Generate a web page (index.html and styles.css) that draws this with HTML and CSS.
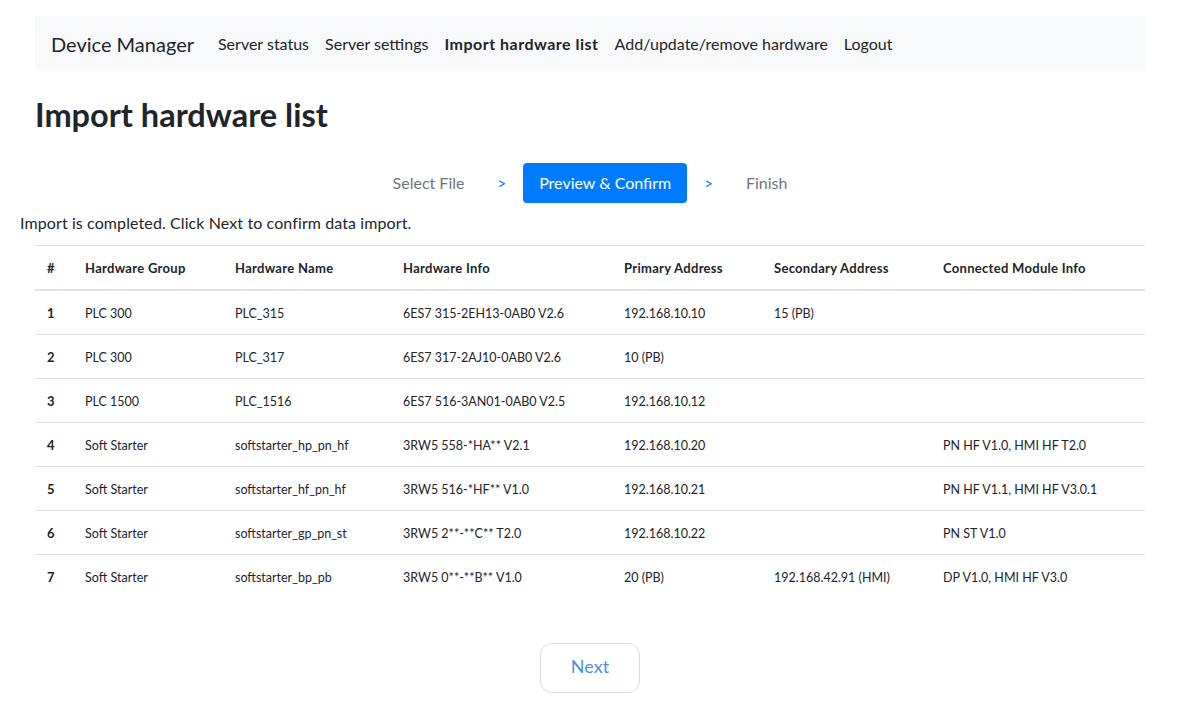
FILE: index.html
```html
<!DOCTYPE html>
<html lang="en">
<head>
<meta charset="utf-8">
<title>Import hardware list</title>
<link rel="stylesheet" href="styles.css">
</head>
<body>
<div class="page">
  <nav class="navbar">
    <span class="brand">Device Manager</span>
    <a class="nav-link">Server status</a>
    <a class="nav-link">Server settings</a>
    <a class="nav-link active">Import hardware list</a>
    <a class="nav-link">Add/update/remove hardware</a>
    <a class="nav-link">Logout</a>
  </nav>

  <h2 class="title">Import hardware list</h2>

  <div class="steps">
    <span class="step">Select File</span>
    <span class="sep">&gt;</span>
    <span class="step current">Preview &amp; Confirm</span>
    <span class="sep">&gt;</span>
    <span class="step">Finish</span>
  </div>

  <p class="message">Import is completed. Click Next to confirm data import.</p>

  <table class="table">
    <colgroup>
      <col class="c1"><col class="c2"><col class="c3"><col class="c4"><col class="c5"><col class="c6"><col class="c7">
    </colgroup>
    <thead>
      <tr><th>#</th><th>Hardware Group</th><th>Hardware Name</th><th>Hardware Info</th><th>Primary Address</th><th>Secondary Address</th><th>Connected Module Info</th></tr>
    </thead>
    <tbody>
      <tr><th>1</th><td>PLC 300</td><td>PLC_315</td><td>6ES7 315-2EH13-0AB0 V2.6</td><td>192.168.10.10</td><td>15 (PB)</td><td></td></tr>
      <tr><th>2</th><td>PLC 300</td><td>PLC_317</td><td>6ES7 317-2AJ10-0AB0 V2.6</td><td>10 (PB)</td><td></td><td></td></tr>
      <tr><th>3</th><td>PLC 1500</td><td>PLC_1516</td><td>6ES7 516-3AN01-0AB0 V2.5</td><td>192.168.10.12</td><td></td><td></td></tr>
      <tr><th>4</th><td>Soft Starter</td><td>softstarter_hp_pn_hf</td><td>3RW5 558-*HA** V2.1</td><td>192.168.10.20</td><td></td><td>PN HF V1.0, HMI HF T2.0</td></tr>
      <tr><th>5</th><td>Soft Starter</td><td>softstarter_hf_pn_hf</td><td>3RW5 516-*HF** V1.0</td><td>192.168.10.21</td><td></td><td>PN HF V1.1, HMI HF V3.0.1</td></tr>
      <tr><th>6</th><td>Soft Starter</td><td>softstarter_gp_pn_st</td><td>3RW5 2**-**C** T2.0</td><td>192.168.10.22</td><td></td><td>PN ST V1.0</td></tr>
      <tr><th>7</th><td>Soft Starter</td><td>softstarter_bp_pb</td><td>3RW5 0**-**B** V1.0</td><td>20 (PB)</td><td>192.168.42.91 (HMI)</td><td>DP V1.0, HMI HF V3.0</td></tr>
    </tbody>
  </table>

  <div class="actions">
    <button class="next-btn" type="button">Next</button>
  </div>
</div>
</body>
</html>
```

FILE: styles.css
```css
* { box-sizing: border-box; }
html, body { margin: 0; padding: 0; background: #fff; }
body {
  font-family: Lato, "Open Sans", sans-serif;
  color: #212529;
  font-size: 16px;
  line-height: 1.5;
}
.page {
  width: 1160px;
  padding: 16px 0 0 20px;
}
.navbar {
  margin: 0 15px;
  height: 55px;
  background: #f8f9fa;
  display: flex;
  align-items: center;
  padding: 0 16px;
}
.brand {
  font-size: 20px;
  margin-right: 16px;
  color: #212529;
}
.nav-link {
  padding: 0 8px;
  color: #212529;
  font-size: 16px;
}
.nav-link.active { font-weight: 700; letter-spacing: 0.5px; }

.title {
  margin: 20px 15px 0;
  font-size: 32.5px;
  font-weight: 700;
  line-height: 47px;
}
.steps {
  margin: 25px 15px 0;
  display: flex;
  justify-content: center;
  align-items: center;
}
.step {
  padding: 8px 16px;
  line-height: 24px;
  color: #6c757d;
  border-radius: 4px;
}
.step.current {
  background: #007bff;
  color: #fff;
}
.sep {
  color: #007bff;
  font-size: 15px;
  padding: 0 17px;
}
.message {
  margin: 10px 0 0;
  line-height: 20px;
  letter-spacing: 0.1px;
}
.table {
  margin: 12px 15px 0;
  width: 1110px;
  border-collapse: collapse;
  table-layout: fixed;
  font-size: 12.5px;
}
.c1 { width: 38px; }
.c2 { width: 150px; }
.c3 { width: 168px; }
.c4 { width: 221px; }
.c5 { width: 150px; }
.c6 { width: 169px; }
.c7 { width: 214px; }
.table th, .table td {
  padding: 13px 12px 11px;
  line-height: 19px;
  text-align: left;
  border-top: 1px solid #dee2e6;
  vertical-align: top;
}
.table th { font-weight: 700; font-size: 13px; letter-spacing: 0.3px; }
.table thead th {
  border-bottom: 2px solid #dee2e6;
}
.table td { font-weight: 400; }
.actions {
  margin: 45px 15px 0;
  display: flex;
  justify-content: center;
}
.next-btn {
  width: 100px;
  height: 50px;
  padding: 0 0 4px;
  border: 1px solid #dcdcdc;
  border-radius: 12px;
  background: #fff;
  color: #4a90d9;
  font-family: Lato, sans-serif;
  font-size: 18px;
}
```
